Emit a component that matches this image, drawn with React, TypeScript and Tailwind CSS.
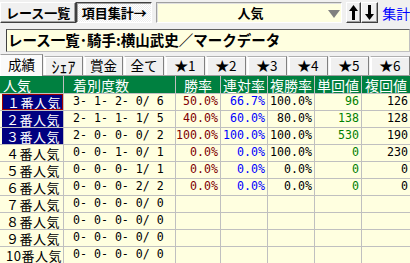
import React from "react";

const JP = { fontFamily: '"Noto Sans CJK JP", sans-serif' };
const MONO = { fontFamily: '"DejaVu Sans Mono", "Noto Sans CJK JP", monospace' };

type Row = {
  label: string;
  sel?: boolean;
  focus?: boolean;
  rec: string;
  win?: string;
  ren?: string;
  fuku?: string;
  tan?: string;
  fk?: string;
};

const rows: Row[] = [
  { label: "１番人気", sel: true, focus: true, rec: "3- 1- 2- 0/ 6", win: "50.0%", ren: "66.7%", fuku: "100.0%", tan: "96", fk: "126" },
  { label: "２番人気", sel: true, rec: "2- 1- 1- 1/ 5", win: "40.0%", ren: "60.0%", fuku: "80.0%", tan: "138", fk: "128" },
  { label: "３番人気", sel: true, rec: "2- 0- 0- 0/ 2", win: "100.0%", ren: "100.0%", fuku: "100.0%", tan: "530", fk: "190" },
  { label: "４番人気", rec: "0- 0- 1- 0/ 1", win: "0.0%", ren: "0.0%", fuku: "100.0%", tan: "0", fk: "230" },
  { label: "５番人気", rec: "0- 0- 0- 1/ 1", win: "0.0%", ren: "0.0%", fuku: "0.0%", tan: "0", fk: "0" },
  { label: "６番人気", rec: "0- 0- 0- 2/ 2", win: "0.0%", ren: "0.0%", fuku: "0.0%", tan: "0", fk: "0" },
  { label: "７番人気", rec: "0- 0- 0- 0/ 0" },
  { label: "８番人気", rec: "0- 0- 0- 0/ 0" },
  { label: "９番人気", rec: "0- 0- 0- 0/ 0" },
  { label: "10番人気", rec: "0- 0- 0- 0/ 0" },
];

const tabs = ["ｼｪｱ", "賞金", "全て", "★1", "★2", "★3", "★4", "★5", "★6"];
const tabW = [40, 40, 41, 41, 41, 41, 41, 41, 41];

function Arrow({ up }: { up?: boolean }) {
  return (
    <svg width="9" height="15" viewBox="0 0 9 15">
      {up ? (
        <>
          <polygon points="4.5,0 9,6 0,6" fill="#000" />
          <rect x="3" y="5" width="3" height="10" fill="#000" />
        </>
      ) : (
        <>
          <rect x="3" y="0" width="3" height="10" fill="#000" />
          <polygon points="4.5,15 9,9 0,9" fill="#000" />
        </>
      )}
    </svg>
  );
}

export default function App() {
  const num = "flex items-center justify-end pr-[2px] bg-[#ffffe0] text-[11.6px] leading-none whitespace-pre overflow-hidden";
  return (
    <div className="w-[410px] h-[263px] overflow-hidden bg-[#f0f0f0] text-black" style={JP}>
      {/* toolbar */}
      <div className="flex items-start pt-[2px] h-[29px]">
        <div className="w-[77px] h-[21px] flex items-center justify-center font-bold text-[13px] leading-none border border-t-white border-l-white border-r-[#404040] border-b-[#404040] shadow-[inset_-1px_-1px_#a0a0a0] bg-[#f0f0f0]">
          レース一覧
        </div>
        <div className="w-[77px] h-[21px] flex items-center justify-center font-bold text-[13px] leading-none border border-t-[#404040] border-l-[#404040] border-r-white border-b-white shadow-[inset_1px_1px_#a0a0a0] bg-[repeating-conic-gradient(#ffffff_0_25%,#ececec_0_50%)] bg-[length:2px_2px]">
          項目集計→
        </div>
        <div className="ml-[4px] w-[187px] h-[21px] bg-[#ffffe0] border border-t-[#a0a0a0] border-l-[#a0a0a0] border-r-white border-b-white shadow-[inset_1px_1px_#e0e0e0] relative">
          <span className="absolute left-[80px] top-[3px] font-bold text-[13px] leading-none">人気</span>
          <svg className="absolute left-[171px] top-[7px]" width="12" height="8" viewBox="0 0 12 8">
            <polygon points="0,0 12,0 6,8" fill="#808080" />
          </svg>
        </div>
        <div className="ml-[4px] w-[16px] h-[21px] flex items-center justify-center border border-t-white border-l-white border-r-[#404040] border-b-[#404040] shadow-[inset_-1px_-1px_#a0a0a0] bg-[#f0f0f0]">
          <Arrow up />
        </div>
        <div className="w-[17px] h-[21px] flex items-center justify-center border border-t-white border-l-white border-r-[#404040] border-b-[#404040] shadow-[inset_-1px_-1px_#a0a0a0] bg-[#f0f0f0]">
          <Arrow />
        </div>
        <div className="ml-[4px] h-[21px] flex items-center text-[14px] leading-none text-[#0000ff] whitespace-nowrap overflow-hidden">
          集計
        </div>
      </div>

      {/* title */}
      <div className="ml-[6px] h-[23px] bg-[#ffffe0] border border-t-[#606060] border-l-[#404040] border-r-[#c0c0c0] border-b-[#c0c0c0] flex items-center pl-[1px] font-bold text-[14.5px] leading-none whitespace-nowrap overflow-hidden">
        レース一覧･騎手:横山武史／マークデータ
      </div>

      {/* tabs */}
      <div className="mt-[2px] h-[22px] flex items-end gap-px border-b border-[#a0a0a0] relative">
        <div className="w-[44px] h-[22px] flex items-center justify-center text-[13.5px] leading-none bg-[#fafafa] border border-b-0 border-t-[#a0a0a0] border-l-white border-r-[#808080] relative z-10 -mb-px pb-px">
          成績
        </div>
        {tabs.map((t, i) => (
          <div
            key={t}
            style={{ width: tabW[i] }}
            className={
              "h-[19px] flex items-center justify-center leading-none bg-[#f0f0f0] border border-b-0 border-t-[#b0b0b0] border-l-white border-r-[#808080] shadow-[inset_1px_1px_#ffffff] " +
              (i === 0 ? "text-[16px]" : "text-[13.5px]")
            }
          >
            {t}
          </div>
        ))}
      </div>

      {/* table */}
      <div className="grid grid-cols-[63px_111px_44px_46px_46px_46px_48px] grid-rows-[17px_repeat(10,16px)] gap-px bg-[#c0c0c0] text-[14px] leading-none">
        {["人気", "着別度数", "勝率", "連対率", "複勝率", "単回値", "複回値"].map((h, i) => (
          <div
            key={h}
            className={
              "bg-[#008040] text-white flex items-center whitespace-nowrap overflow-hidden " +
              (i === 0 ? "pl-[3px]" : i === 1 ? "pl-[9px]" : "justify-center")
            }
          >
            {h}
          </div>
        ))}
        {rows.map((r) => (
          <React.Fragment key={r.label}>
            <div className="bg-[#ffffe0] flex overflow-hidden">
              <div
                className={
                  "flex-1 flex items-center pl-[4px] text-[13px] tracking-[0.5px] whitespace-nowrap overflow-hidden ml-[2px] " +
                  (r.sel ? "bg-[#000080] text-white " : "text-black ") +
                  (r.focus ? "border border-[#a00000] pl-[3px]" : "")
                }
              >
                {r.label}
              </div>
            </div>
            <div className="bg-[#ffffe0] flex items-center pl-[9px] text-[11.6px] whitespace-pre overflow-hidden" style={MONO}>
              {r.rec}
            </div>
            <div className={num + " text-[#800000]"} style={MONO}>{r.win}</div>
            <div className={num + " text-[#0000ff]"} style={MONO}>{r.ren}</div>
            <div className={num + " text-black"} style={MONO}>{r.fuku}</div>
            <div className={num + " text-[#008000]"} style={MONO}>{r.tan}</div>
            <div className={num + " text-black"} style={MONO}>{r.fk}</div>
          </React.Fragment>
        ))}
      </div>
    </div>
  );
}
